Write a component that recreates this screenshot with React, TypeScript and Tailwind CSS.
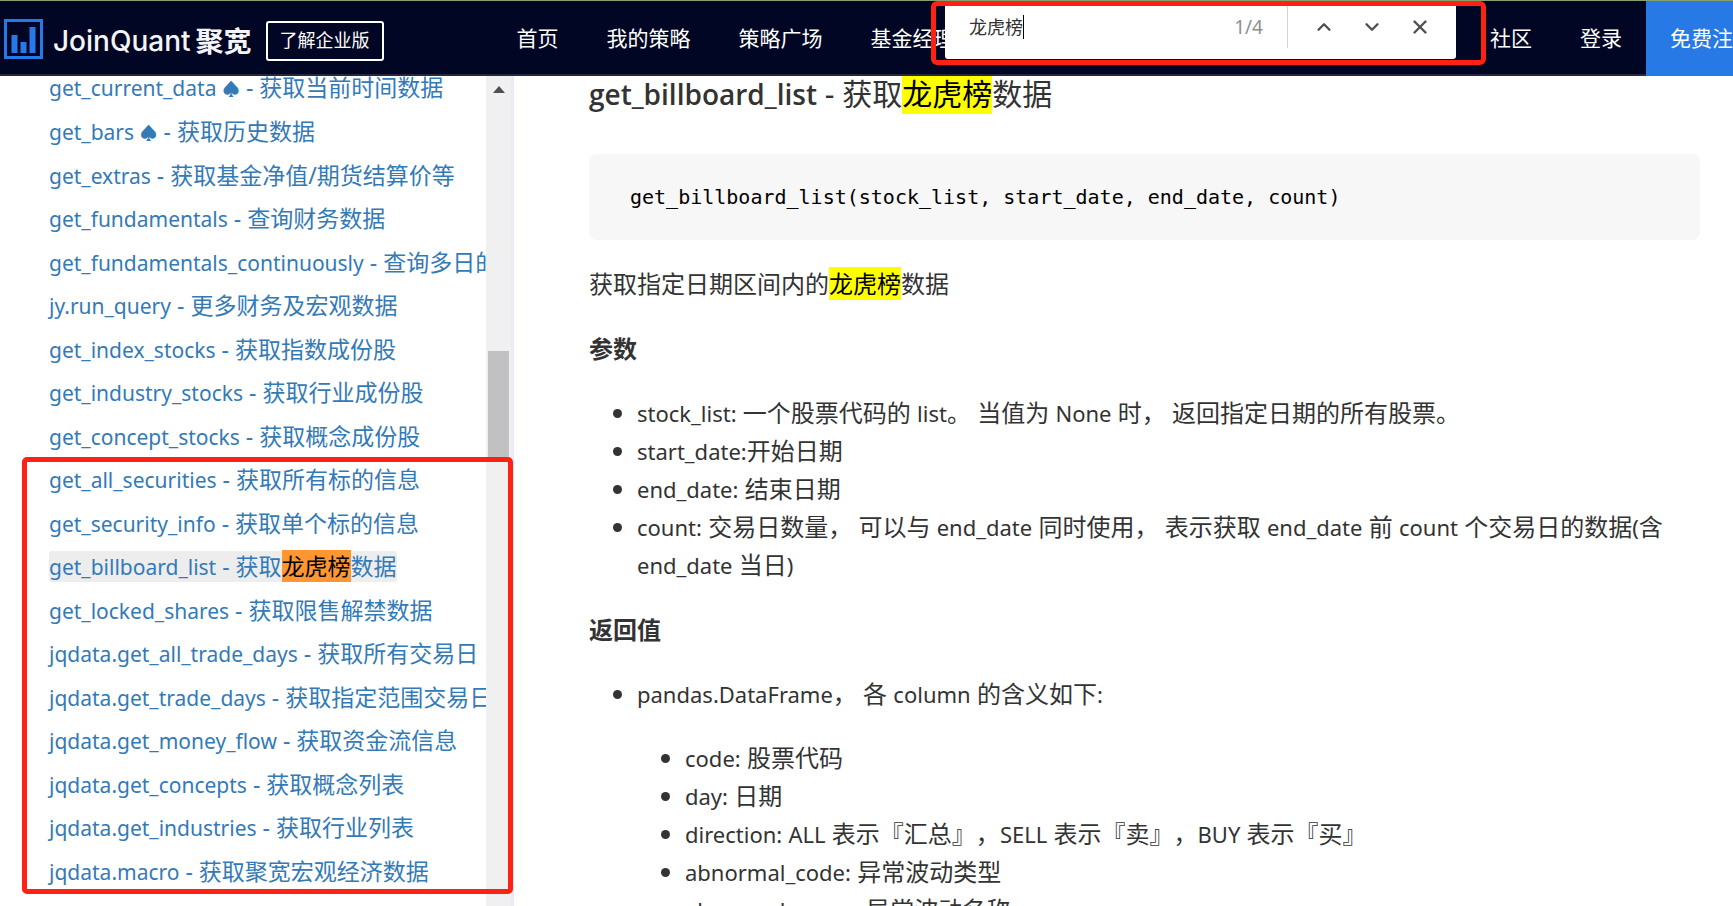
import { ReactNode } from "react";
import { ChevronDown, ChevronUp, X } from "lucide-react";

const KEYWORD = "龙虎榜";

const apiLinks: [string, string][] = [
  ["get_current_data ♠", "获取当前时间数据"],
  ["get_bars ♠", "获取历史数据"],
  ["get_extras", "获取基金净值/期货结算价等"],
  ["get_fundamentals", "查询财务数据"],
  ["get_fundamentals_continuously", "查询多日的财务数据"],
  ["jy.run_query", "更多财务及宏观数据"],
  ["get_index_stocks", "获取指数成份股"],
  ["get_industry_stocks", "获取行业成份股"],
  ["get_concept_stocks", "获取概念成份股"],
  ["get_all_securities", "获取所有标的信息"],
  ["get_security_info", "获取单个标的信息"],
  ["get_billboard_list", "获取龙虎榜数据"],
  ["get_locked_shares", "获取限售解禁数据"],
  ["jqdata.get_all_trade_days", "获取所有交易日"],
  ["jqdata.get_trade_days", "获取指定范围交易日"],
  ["jqdata.get_money_flow", "获取资金流信息"],
  ["jqdata.get_concepts", "获取概念列表"],
  ["jqdata.get_industries", "获取行业列表"],
  ["jqdata.macro", "获取聚宽宏观经济数据"],
];

function Found({ text, current = false }: { text: string; current?: boolean }) {
  const [before, after] = text.split(KEYWORD);
  if (after === undefined) return <>{text}</>;
  return (
    <>
      {before}
      <mark className={current ? "bg-[#ff9632] text-black" : "bg-[#ffff00] text-black"}>{KEYWORD}</mark>
      {after}
    </>
  );
}

// Sets Latin runs slightly smaller than the Chinese text around them.
function Mixed({ children }: { children: string }) {
  return (
    <>
      {children.split(/([\x21-\x7e]+)/).map((run, i) =>
        i % 2 === 1 ? (
          <span key={i} className="text-[22px]">
            {run}
          </span>
        ) : (
          run
        ),
      )}
    </>
  );
}

function NavLink({ children, primary = false }: { children: ReactNode; primary?: boolean }) {
  return (
    <a
      href="#"
      className={
        primary
          ? "flex items-center whitespace-nowrap bg-[#2779e6] px-6 text-[21px] text-white"
          : "flex items-center whitespace-nowrap px-6 text-[21px] text-white"
      }
    >
      {children}
    </a>
  );
}

function Logo() {
  return (
    <a href="#" className="flex items-center gap-[10px] text-[#f4f5f8]">
      <svg width="39" height="40" viewBox="0 0 39 40" aria-hidden="true">
        <rect x="1.5" y="1.5" width="36" height="37" fill="none" stroke="#2779e6" strokeWidth="3" />
        <rect x="7.5" y="16" width="6" height="18" fill="#2779e6" />
        <rect x="16.5" y="23" width="6" height="11" fill="#2779e6" />
        <rect x="25.5" y="8" width="6" height="26" fill="#2779e6" />
      </svg>
      <span className="flex items-center gap-[5px] pt-1">
        <span className="font-['Inter','Noto_Sans',sans-serif] text-[28px] font-medium">JoinQuant</span>
        <span className="text-[28px] font-bold">聚宽</span>
      </span>
    </a>
  );
}

function FindBar() {
  return (
    <div className="absolute left-[931px] top-0 h-16 w-[555px] rounded-md border-5 border-[#ff2114] pl-[9px]">
      <form className="flex h-[53px] w-[511px] rounded-b-[3px] bg-white pl-6">
        <label className="relative flex h-[42px] flex-1 items-center">
          <span className="sr-only">查找</span>
          <input
            defaultValue={KEYWORD}
            className="w-full bg-transparent text-[18px] text-[#333] outline-none"
          />
          <span className="absolute left-[54px] h-6 w-px bg-black" />
        </label>
        <span className="flex h-[42px] items-center pr-6 text-[19px] text-[#8f8f8f]">1/4</span>
        <div className="flex h-[42px] items-center border-l border-[#d5d5d5] pl-3 pr-3">
          <button type="button" aria-label="上一个" className="flex w-12 justify-center text-[#4f4f4f]">
            <ChevronUp size={22} strokeWidth={2.6} />
          </button>
          <button type="button" aria-label="下一个" className="flex w-12 justify-center text-[#4f4f4f]">
            <ChevronDown size={22} strokeWidth={2.6} />
          </button>
          <button type="button" aria-label="关闭" className="flex w-12 justify-center text-[#4f4f4f]">
            <X size={22} strokeWidth={2.6} />
          </button>
        </div>
      </form>
    </div>
  );
}

function Header() {
  return (
    <header className="relative z-20 h-[76px] shrink-0 border-b-2 border-t border-b-[#24273f] border-t-[#87a06c] bg-[#000623]">
      <div className="-mr-[45px] flex h-[75px]">
        <div className="flex items-center gap-[14px] pl-1">
          <Logo />
          <a
            href="#"
            className="mt-1 flex h-10 items-center whitespace-nowrap rounded-[3px] border-2 border-white px-3 text-[18px] text-white"
          >
            了解企业版
          </a>
        </div>
        <nav className="ml-[109px] flex">
          <NavLink>首页</NavLink>
          <NavLink>我的策略</NavLink>
          <NavLink>策略广场</NavLink>
          <NavLink>基金经理</NavLink>
        </nav>
        <nav className="ml-auto flex">
          <NavLink>社区</NavLink>
          <NavLink>登录</NavLink>
          <NavLink primary>免费注册</NavLink>
        </nav>
      </div>
      <FindBar />
    </header>
  );
}

function Sidebar() {
  return (
    <aside className="relative flex w-[514px] shrink-0 border-r-3 border-[#ebebf5]">
      <nav className="-mt-[10px] min-w-0 flex-1 overflow-hidden pl-[41px]">
        <ul className="pl-2 text-[23px]">
          {apiLinks.map(([name, label]) => {
            const current = label.includes(KEYWORD);
            const [func, suit] = name.split("♠");
            return (
              <li key={name} className="flex h-11 items-center whitespace-nowrap even:h-[43px]">
                <a
                  href="#"
                  className={
                    current
                      ? "rounded-[3px] bg-[#ededed] leading-[30px] text-[#337ab7]"
                      : "leading-[30px] text-[#337ab7]"
                  }
                >
                  <span className="text-[21px]">
                    {func}
                    {suit !== undefined && <span className="text-[18px]">♠</span>}
                  </span>
                  {" - "}
                  <Found text={label} current />
                </a>
              </li>
            );
          })}
        </ul>
      </nav>
      <div className="flex w-[25px] flex-col items-center bg-[#f0f0f0]">
        <svg width="12" height="7" viewBox="0 0 12 7" className="mt-[10px]" aria-hidden="true">
          <path d="M6 0L12 7H0Z" fill="#505050" />
        </svg>
        <div className="mt-[258px] h-[106px] w-[21px] bg-[#c1c1c1]" />
      </div>
      <div className="pointer-events-none absolute left-[22px] top-[381px] h-[437px] w-[491px] rounded-[5px] border-5 border-[#ff2114]" />
    </aside>
  );
}

function Article() {
  return (
    <main className="min-w-0 flex-1 pl-[75px] pr-[33px] text-[24px] leading-[38px] text-[#333] [text-spacing-trim:space-all]">
      <h2 className="text-[30px] leading-[36px]">
        <span className="font-['Open_Sans','Noto_Sans',sans-serif] text-[28px] font-semibold">get_billboard_list</span>
        {" - "}
        <Found text="获取龙虎榜数据" />
      </h2>
      <pre className="mt-[42px] rounded-lg bg-[#f7f7f7] px-[41px] py-6 font-['DejaVu_Sans_Mono',monospace] text-[20px] leading-[38px] text-black">
        get_billboard_list(stock_list, start_date, end_date, count)
      </pre>
      <p className="mt-[25px]">
        <Found text="获取指定日期区间内的龙虎榜数据" />
      </p>
      <h3 className="mt-[27px] font-bold">参数</h3>
      <ul className="mt-[26px] list-disc pl-12">
        <li><Mixed>stock_list: 一个股票代码的 list。 当值为 None 时， 返回指定日期的所有股票。</Mixed></li>
        <li><Mixed>start_date:开始日期</Mixed></li>
        <li><Mixed>end_date: 结束日期</Mixed></li>
        <li><Mixed>count: 交易日数量， 可以与 end_date 同时使用， 表示获取 end_date 前 count 个交易日的数据(含 end_date 当日)</Mixed></li>
      </ul>
      <h3 className="mt-[27px] font-bold">返回值</h3>
      <ul className="mt-[26px] list-disc pl-12">
        <li>
          <Mixed>pandas.DataFrame， 各 column 的含义如下:</Mixed>
          <ul className="mt-[26px] list-disc pl-12">
            <li><Mixed>code: 股票代码</Mixed></li>
            <li><Mixed>day: 日期</Mixed></li>
            <li><Mixed>direction: ALL 表示『汇总』，SELL 表示『卖』，BUY 表示『买』</Mixed></li>
            <li><Mixed>abnormal_code: 异常波动类型</Mixed></li>
            <li><Mixed>abnormal_name: 异常波动名称</Mixed></li>
          </ul>
        </li>
      </ul>
    </main>
  );
}

export default function App() {
  return (
    <div lang="zh-CN" className="flex h-screen flex-col overflow-hidden bg-white font-['Noto_Sans','Noto_Sans_CJK_SC',sans-serif]">
      <Header />
      <div className="flex min-h-0 flex-1">
        <Sidebar />
        <Article />
      </div>
    </div>
  );
}
